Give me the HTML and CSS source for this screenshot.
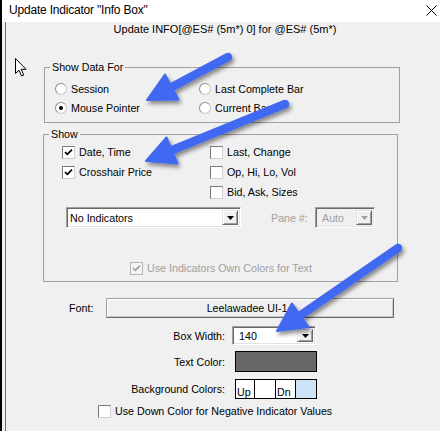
FILE: index.html
```html
<!DOCTYPE html>
<html>
<head>
<meta charset="utf-8">
<title>Update Indicator</title>
<link rel="stylesheet" href="styles.css">
</head>
<body>
<div class="window">
  <div class="titlebar">
    <span class="title">Update Indicator "Info Box"</span>
    <svg class="close" width="11" height="11" viewBox="0 0 11 11"><path d="M0.5 0.5L10.5 10.5M10.5 0.5L0.5 10.5" stroke="#000" stroke-width="1" fill="none"/></svg>
  </div>
  <div class="client">
    <div class="subtitle">Update INFO[@ES# (5m*) 0] for @ES# (5m*)</div>

    <div class="group g1">
      <span class="legend">Show Data For</span>
      <div class="radios">
        <div class="opt"><span class="radio"></span>Session</div>
        <div class="opt"><span class="radio"></span>Last Complete Bar</div>
        <div class="opt"><span class="radio on"></span>Mouse Pointer</div>
        <div class="opt"><span class="radio"></span>Current Bar</div>
      </div>
    </div>

    <div class="group g2">
      <span class="legend">Show</span>
      <div class="checks">
        <div class="col left">
          <div class="opt"><span class="cb"><svg width="11" height="11" viewBox="0 0 11 11"><path d="M2 5l2.3 2.3L9 2.6" stroke="#000" stroke-width="1.7" fill="none"/></svg></span>Date, Time</div>
          <div class="opt"><span class="cb"><svg width="11" height="11" viewBox="0 0 11 11"><path d="M2 5l2.3 2.3L9 2.6" stroke="#000" stroke-width="1.7" fill="none"/></svg></span>Crosshair Price</div>
        </div>
        <div class="col">
          <div class="opt"><span class="cb"></span>Last, Change</div>
          <div class="opt"><span class="cb"></span>Op, Hi, Lo, Vol</div>
          <div class="opt"><span class="cb"></span>Bid, Ask, Sizes</div>
        </div>
      </div>
      <div class="indrow">
        <div class="combo wide"><span class="val">No Indicators</span><span class="btn"><svg width="7" height="4" viewBox="0 0 7 4"><path d="M0 0H7L3.5 4Z" fill="#000"/></svg></span></div>
        <span class="pane-label">Pane #:</span>
        <div class="combo pane disabled"><span class="val">Auto</span><span class="btn"><svg width="7" height="4" viewBox="0 0 7 4"><path d="M0 0H7L3.5 4Z" fill="#a0a0a0"/></svg></span></div>
      </div>
      <div class="opt own disabled"><span class="cb dis"><svg width="11" height="11" viewBox="0 0 11 11"><path d="M2 5l2.3 2.3L9 2.6" stroke="#a0a0a0" stroke-width="1.7" fill="none"/></svg></span>Use Indicators Own Colors for Text</div>
    </div>

    <div class="fontrow">
      <span class="font-label">Font:</span>
      <div class="button">Leelawadee UI-14</div>
    </div>

    <div class="row r-width">
      <span class="lbl">Box Width:</span>
      <div class="combo small"><span class="val">140</span><span class="btn"><svg width="7" height="4" viewBox="0 0 7 4"><path d="M0 0H7L3.5 4Z" fill="#000"/></svg></span></div>
    </div>
    <div class="row r-text">
      <span class="lbl">Text Color:</span>
      <div class="swatch"></div>
    </div>
    <div class="row r-bg">
      <span class="lbl">Background Colors:</span>
      <div class="bgbox">
        <span class="cell c1">Up</span>
        <span class="cell c2"></span>
        <span class="cell c3">Dn</span>
        <span class="cell c4"></span>
      </div>
    </div>
    <div class="opt neg"><span class="cb"></span>Use Down Color for Negative Indicator Values</div>
  </div>
</div>

<svg class="cursor" width="13" height="19" viewBox="0 0 13 19"><path d="M0.5 0.5V15.5L4 12.2L6.6 18L8.7 17L6.2 11.3H11Z" fill="#fff" stroke="#000" stroke-width="1" stroke-linejoin="miter"/></svg>

<svg class="overlay" width="440" height="431" viewBox="0 0 440 431">
  <defs>
    <filter id="sh" x="-20%" y="-20%" width="140%" height="140%">
      <feDropShadow dx="2" dy="3" stdDeviation="2.2" flood-color="#000" flood-opacity="0.45"/>
    </filter>
  </defs>
  <g filter="url(#sh)" fill="#3f68f0" stroke="#3f68f0">
    <line x1="228" y1="57" x2="170" y2="88" stroke-width="8.5" stroke-linecap="round"/>
    <polygon points="147,100 178.5,99.5 165,74.5" stroke-width="2" stroke-linejoin="round"/>
    <line x1="285" y1="104" x2="170" y2="151" stroke-width="8.5" stroke-linecap="round"/>
    <polygon points="146,161 177.5,163.5 166.5,137.5" stroke-width="2" stroke-linejoin="round"/>
    <line x1="398" y1="248" x2="298" y2="317" stroke-width="8.5" stroke-linecap="round"/>
    <polygon points="277,331 308.5,327 292,303.5" stroke-width="2" stroke-linejoin="round"/>
  </g>
</svg>
</body>
</html>
```

FILE: styles.css
```css
html, body {
  margin: 0;
  padding: 0;
}
body {
  width: 440px;
  height: 431px;
  overflow: hidden;
  position: relative;
  background: #000;
  font-family: "Liberation Sans", Arial, sans-serif;
  font-size: 10.7px;
  color: #000;
}
.window {
  margin-left: 2px;
  height: 431px;
  background: #f0f0f0;
  display: flex;
  flex-direction: column;
}
.titlebar {
  height: 22px;
  flex: none;
  background: #fff;
  display: flex;
  align-items: center;
  justify-content: space-between;
  padding: 0 3px 2px 7px;
  box-sizing: border-box;
}
.title {
  font-size: 12px;
  letter-spacing: -0.2px;
  line-height: 14px;
}
.close {
  display: block;
  margin-top: 1px;
}
.client {
  flex: 1;
  margin-left: 3px;
  border-left: 1px solid #6d6d6d;
}
.subtitle {
  text-align: center;
  line-height: 14px;
  padding-left: 4px;
  font-size: 11px;
}

/* group boxes */
.group {
  position: relative;
  border: 1px solid #a0a0a0;
  box-sizing: border-box;
}
.legend {
  position: absolute;
  top: -7px;
  left: 5px;
  padding: 0 2px;
  background: #f0f0f0;
  line-height: 13px;
}
.g1 {
  margin: 31px 0 0 38px;
  width: 356px;
  padding: 11px 0 5px 10px;
}
.radios {
  display: grid;
  grid-template-columns: 144px auto;
}
.opt {
  display: flex;
  align-items: center;
  height: 19px;
  white-space: nowrap;
}
.radio {
  flex: none;
  position: relative;
  width: 12px;
  height: 12px;
  box-sizing: border-box;
  border-radius: 50%;
  border: 1px solid #8c8c8c;
  border-right-color: #c9c9c9;
  border-bottom-color: #c9c9c9;
  background: #fff;
  margin-right: 4px;
}
.radio.on::after {
  content: "";
  position: absolute;
  left: 3px;
  top: 3px;
  width: 4px;
  height: 4px;
  border-radius: 50%;
  background: #000;
}

.g2 {
  margin: 11px 0 0 37px;
  width: 355px;
  padding: 7px 0 3px 0;
}
.checks {
  display: flex;
  padding-left: 18px;
}
.checks .col.left {
  width: 148px;
}
.checks .opt {
  height: 20px;
}
.cb {
  flex: none;
  width: 13px;
  height: 13px;
  box-sizing: border-box;
  border: 1px solid #7a7a7a;
  border-right-color: #cfcfcf;
  border-bottom-color: #cfcfcf;
  background: #fff;
  margin-right: 4px;
  display: flex;
}
.cb svg {
  display: block;
}
.cb.dis {
  background: #f4f4f4;
  border-color: #b5b5b5;
}

.indrow {
  display: flex;
  align-items: center;
  margin-top: 5px;
  padding-left: 22px;
}
.combo {
  display: flex;
  align-items: stretch;
  box-sizing: border-box;
  padding: 2px;
  border: 1px solid;
  border-color: #a0a0a0 #fff #fff #a0a0a0;
  box-shadow: inset 1px 1px 0 #696969, inset -1px -1px 0 #e3e3e3;
  background: #fff;
}
.combo .val {
  flex: 1;
  display: flex;
  align-items: center;
  padding-left: 1px;
  white-space: nowrap;
}
.combo .btn {
  width: 16px;
  flex: none;
  box-sizing: border-box;
  background: #f0f0f0;
  border: 1px solid;
  border-color: #e3e3e3 #696969 #696969 #e3e3e3;
  box-shadow: inset 1px 1px 0 #fff, inset -1px -1px 0 #a0a0a0;
  display: flex;
  align-items: center;
  justify-content: center;
}
.combo.wide {
  width: 175px;
  height: 21px;
}
.pane-label {
  color: #a0a0a0;
  margin-left: 30px;
  width: 44px;
}
.combo.pane {
  width: 60px;
  height: 21px;
  background: #f0f0f0;
}
.combo.disabled .val {
  color: #a0a0a0;
  padding-left: 4px;
}
.own {
  margin-top: 30px;
  padding-left: 86px;
  height: 20px;
}
.own.disabled {
  color: #a0a0a0;
}

/* lower form */
.fontrow {
  display: flex;
  align-items: center;
  margin-top: 16px;
  padding-left: 63px;
}
.font-label {
  width: 37px;
}
.button {
  width: 288px;
  height: 20px;
  box-sizing: border-box;
  background: #f0f0f0;
  border: 1px solid #a0a0a0;
  border-right-color: #696969;
  border-bottom-color: #696969;
  box-shadow: inset 1px 1px 0 #fff, inset -1px -1px 0 #c8c8c8;
  display: flex;
  align-items: center;
  justify-content: center;
}
.row {
  display: flex;
  align-items: center;
}
.lbl {
  width: 219px;
  text-align: right;
  flex: none;
}
.r-width {
  margin-top: 8px;
}
.combo.small {
  width: 84px;
  height: 19px;
  margin-left: 7px;
}
.combo.small .val {
  padding-left: 4px;
}
.r-text {
  margin-top: 6px;
}
.swatch {
  margin-left: 10px;
  width: 82px;
  height: 21px;
  box-sizing: border-box;
  background: #686868;
  border: 1px solid #000;
}
.r-bg {
  margin-top: 7px;
}
.bgbox {
  margin-left: 10px;
  width: 82px;
  height: 20px;
  box-sizing: border-box;
  border: 1px solid #000;
  display: flex;
  background: #fff;
}
.cell {
  box-sizing: border-box;
  display: flex;
  align-items: flex-end;
  line-height: 12px;
  padding-left: 1px;
}
.c1 { width: 19px; border-right: 1px solid #000; }
.c2 { width: 21px; border-right: 1px solid #000; }
.c3 { width: 20px; border-right: 1px solid #000; }
.c4 { flex: 1; background: #cce4f7; }
.opt.neg {
  margin-top: 3px;
  height: 18px;
  padding-left: 92px;
}

/* overlays */
.cursor {
  position: absolute;
  left: 15px;
  top: 58px;
}
.overlay {
  position: absolute;
  left: 0;
  top: 0;
  pointer-events: none;
}
```
